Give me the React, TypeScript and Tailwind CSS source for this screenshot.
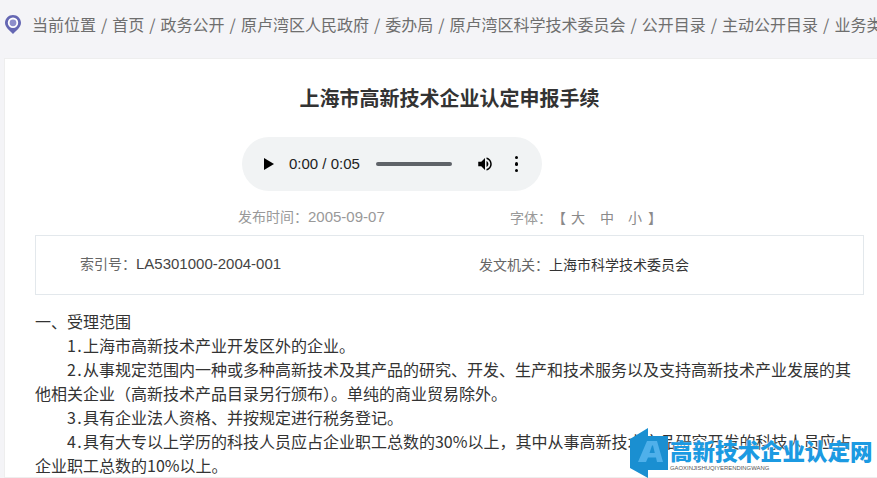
const crumbs = ['当前位置', '首页', '政务公开', '原卢湾区人民政府', '委办局', '原卢湾区科学技术委员会', '公开目录', '主动公开目录', '业务类'];

function Num({ children }: { children: string }) {
  return <span className="tracking-[1.3px]">{children}</span>;
}

function Logo() {
  return (
    <div className="absolute left-[630px] top-[428px] flex h-[50px] w-[247px] items-start">
      <svg width="40" height="50" viewBox="0 0 40 50" className="shrink-0">
        <path d="M0 11 L18 0 L18 8 L38 8 L38 42 L18 42 L18 50 L0 40 Z" fill="#1a8fd1" />
        <path d="M8 34 L17 13 L27 13 L33 34 L27 34 L26 29.5 L18 29.5 L16 34 Z M19.5 25 L24.8 25 L23 17.5 L22 17.5 Z" fill="#4fb0ea" />
      </svg>
      <div className="flex flex-col">
        <div className="mt-[9px] text-[22.5px] leading-[26px] font-black text-[#1b9ae2] whitespace-nowrap [text-shadow:0_0_2px_white]">高新技术企业认定网</div>
        <div className="mt-[1px] text-[5.9px] leading-[8px] text-[#555] font-['Liberation_Sans',sans-serif] whitespace-nowrap">GAOXINJISHUQIYERENDINGWANG</div>
      </div>
    </div>
  );
}

export default function App() {
  return (
    <div className="relative h-[478px] w-[877px] overflow-hidden bg-[#f4f4f7] font-['Noto_Sans_CJK_SC','Liberation_Sans',sans-serif]">
      {/* Breadcrumb */}
      <div className="flex h-[58px] items-center pl-[5px] pb-[10px] whitespace-nowrap">
        <svg width="16" height="19" viewBox="0 0 16 19" className="shrink-0">
          <path d="M8 0 C3.6 0 0 3.4 0 7.8 C0 12.5 5 16 8 19 C11 16 16 12.5 16 7.8 C16 3.4 12.4 0 8 0 Z" fill="#6567b3" />
          <circle cx="8" cy="7.8" r="4.3" fill="#8d8ecb" stroke="#fff" strokeWidth="1.8" />
        </svg>
        <div className="ml-[11px] flex text-[16px] text-[#6e6e6e]">
          {crumbs.map((c, i) => (
            <span key={c}>{i > 0 && <span className="mx-[5px]">/</span>}{c}</span>
          ))}
        </div>
      </div>

      {/* Article card */}
      <div className="ml-[4px] h-[420px] overflow-hidden border border-[#eeeeee] border-r-0 bg-white pl-[30px] pr-[13px]">
        <h1 className="mt-[24px] text-center text-[20px] leading-[30px] font-bold text-[#333]">上海市高新技术企业认定申报手续</h1>

        {/* Audio player */}
        <div className="ml-[207px] mt-[24px] flex h-[54px] w-[300px] items-center rounded-full bg-[#f1f3f4] pl-[21px] text-[#222]">
          <svg width="12" height="14" viewBox="0 0 12 14" className="shrink-0"><path d="M1 1 L11 7 L1 13 Z" fill="#000" /></svg>
          <span className="ml-[14px] text-[15px] font-['Liberation_Sans',sans-serif]">0:00 / 0:05</span>
          <div className="ml-[16px] h-[4px] w-[76px] rounded-full bg-[#5f6368]" />
          <svg width="18" height="18" viewBox="0 0 24 24" className="ml-[24px] shrink-0" fill="#000">
            <path d="M3 9v6h4l5 5V4L7 9H3zm13.5 3c0-1.8-1-3.3-2.5-4v8c1.5-.7 2.5-2.2 2.5-4z" />
            <path d="M14 3.2v2.1c2.9.9 5 3.5 5 6.7s-2.1 5.8-5 6.7v2.1c4-.9 7-4.5 7-8.8s-3-7.9-7-8.8z" />
          </svg>
          <div className="ml-[21px] flex flex-col gap-[3px]">
            <i className="block size-[3.5px] rounded-full bg-black" />
            <i className="block size-[3.5px] rounded-full bg-black" />
            <i className="block size-[3.5px] rounded-full bg-black" />
          </div>
        </div>

        {/* Meta */}
        <div className="mt-[15px] flex h-[22px] items-center pl-[203px] text-[14px] text-[#999]">
          <span className="w-[272px]">发布时间：<span className="text-[15px] font-['Liberation_Sans',sans-serif]">2005-09-07</span></span>
          <span>字体：</span>
          <span className="text-[#8a8a8a]">【<span className="ml-[5px] mr-[15px]">大</span><span className="mr-[14px]">中</span><span className="mr-[6px]">小</span>】</span>
        </div>

        {/* Info box */}
        <div className="mt-[7px] flex h-[60px] items-center border border-[#e3e8ec] pl-[44px] pb-[2px] text-[14px] text-[#666]">
          <span className="w-[399px]">索引号：<span className="text-[15px] text-[#444] font-['Liberation_Sans',sans-serif]">LA5301000-2004-001</span></span>
          <span>发文机关：<span className="text-[#333]">上海市科学技术委员会</span></span>
        </div>

        {/* Body */}
        <div className="mt-[14px] text-[16px] leading-[24px] text-[#333]">
          <p>一、受理范围</p>
          <p className="indent-[32px]"><Num>1.</Num>上海市高新技术产业开发区外的企业。</p>
          <p className="indent-[32px]"><Num>2.</Num>从事规定范围内一种或多种高新技术及其产品的研究、开发、生产和技术服务以及支持高新技术产业发展的其他相关企业（高新技术产品目录另行颁布）。单纯的商业贸易除外。</p>
          <p className="indent-[32px]"><Num>3.</Num>具有企业法人资格、并按规定进行税务登记。</p>
          <p className="indent-[32px]"><Num>4.</Num>具有大专以上学历的科技人员应占企业职工总数的30%以上，其中从事高新技术产品研究开发的科技人员应占企业职工总数的10%以上。</p>
        </div>
      </div>

      <Logo />
    </div>
  );
}
